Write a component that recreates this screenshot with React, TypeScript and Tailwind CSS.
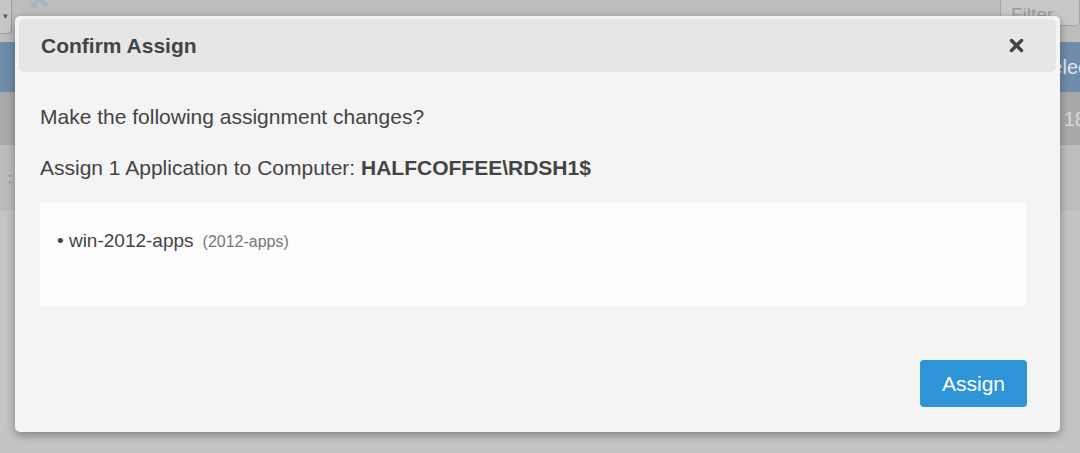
import React from 'react';

const App = () => {
  return (
    <div className="relative w-[1080px] h-[453px] overflow-hidden bg-[#c4c4c4] font-['Liberation_Sans',Arial,sans-serif]">
      {/* dimmed app behind the modal */}
      <div className="flex flex-col">
        <div className="h-[42px] flex items-start justify-between bg-[#bdbdbd]">
          <div className="flex items-start gap-4">
            <div className="w-[12px] h-[34px] border border-l-0 border-t-0 border-[#9a9a9a] rounded-br-[4px] bg-[#c6c6c6] flex items-center justify-center text-[9px] text-[#555]">▾</div>
            <svg width="22" height="16" viewBox="0 0 22 16" className="mt-[-2px]">
              <path d="M5 9 C7 2 15 1 19 8" stroke="#a7b3c2" strokeWidth="3" fill="none" />
              <path d="M2 3 L4 11 L10 8 Z" fill="#a7b3c2" />
            </svg>
          </div>
          <div className="w-[80px] h-[32px] mt-[-6px] border border-[#a5a5a5] rounded-[4px] bg-[#c8c8c8] px-[10px] pt-[6px] text-[19px] text-[#9c9c9c]">Filter</div>
        </div>
        <div className="h-[50px] bg-[#6f8cab] flex items-center justify-end text-[20px] text-[#e0e6ee]">
          <span className="mr-[-8px]">Selec</span>
        </div>
        <div className="h-[53px] bg-[#a9a9a9] flex items-center justify-end text-[20px] text-[#d8d8d8]">
          <span className="mr-[-6px]">18</span>
        </div>
        <div className="h-[66px] bg-[#bdbdbd] flex items-center text-[14px] text-[#888] pl-[8px]">:</div>
      </div>

      {/* modal overlay */}
      <div className="absolute left-[15px] top-[16px] w-[1045px] h-[416px] bg-[#f4f4f4] rounded-[5px] shadow-[0_3px_10px_rgba(0,0,0,0.35)] flex flex-col p-[3px_4px]">
        <div className="h-[53px] bg-[#e6e6e6] rounded-[5px] flex items-center justify-between pl-[22px] pr-[32px]">
          <h2 className="text-[21px] font-bold text-[#444]">Confirm Assign</h2>
          <svg width="15" height="15" viewBox="0 0 15 15">
            <path d="M2.5 2.5 L12.5 12.5 M12.5 2.5 L2.5 12.5" stroke="#444" strokeWidth="3.4" strokeLinecap="round" />
          </svg>
        </div>
        <div className="flex flex-col flex-1 px-[21px]">
          <p className="mt-[32px] text-[21px] leading-[25px] text-[#444]">Make the following assignment changes?</p>
          <p className="mt-[26px] text-[21px] leading-[25px] text-[#444]">
            Assign 1 Application to Computer: <span className="font-bold">HALFCOFFEE\RDSH1$</span>
          </p>
          <div className="mt-[23px] h-[104px] bg-[#fdfdfd] rounded-[4px] px-[17px] pt-[24px] mr-[9px]">
            <div className="flex items-baseline gap-[9px]">
              <span className="text-[19px] text-[#444]">• win-2012-apps</span>
              <span className="text-[16px] text-[#777]">(2012-apps)</span>
            </div>
          </div>
          <div className="flex justify-end mt-[53px] mr-[8px]">
            <button className="w-[107px] h-[47px] bg-[#2d94d8] rounded-[4px] text-white text-[21px]">Assign</button>
          </div>
        </div>
      </div>
    </div>
  );
};

export default App;
